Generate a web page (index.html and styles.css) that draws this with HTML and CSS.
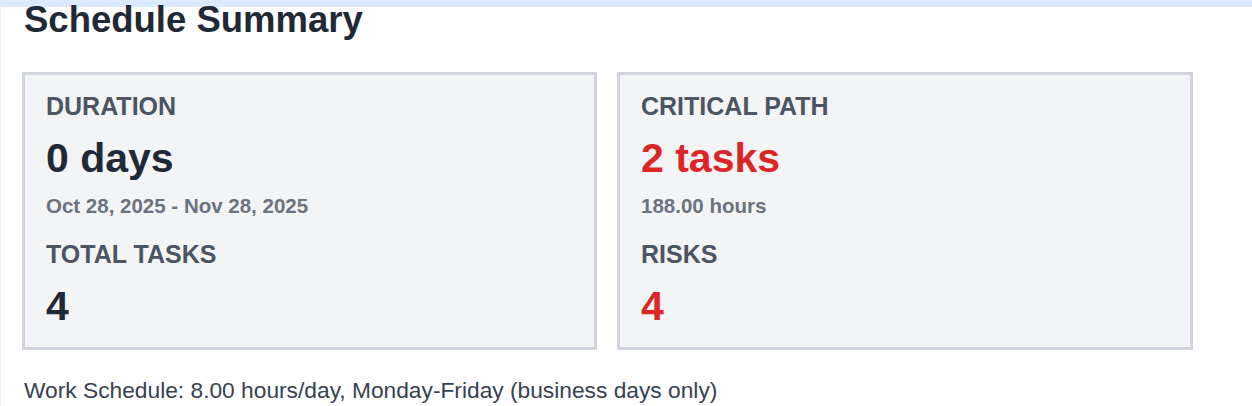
FILE: index.html
```html
<!DOCTYPE html>
<html lang="en">
<head>
<meta charset="utf-8">
<title>Schedule Summary</title>
<link rel="stylesheet" href="styles.css">
</head>
<body>
<div class="top-strip"></div>
<main class="page">
  <h2 class="title">Schedule Summary</h2>
  <div class="cards">
    <section class="card">
      <div class="label">DURATION</div>
      <div class="value">0 days</div>
      <div class="sub">Oct 28, 2025 - Nov 28, 2025</div>
      <div class="label label-second">TOTAL TASKS</div>
      <div class="value">4</div>
    </section>
    <section class="card">
      <div class="label">CRITICAL PATH</div>
      <div class="value value-red">2 tasks</div>
      <div class="sub">188.00 hours</div>
      <div class="label label-second">RISKS</div>
      <div class="value value-red">4</div>
    </section>
  </div>
  <p class="note">Work Schedule: 8.00 hours/day, Monday-Friday (business days only)</p>
</main>
</body>
</html>
```

FILE: styles.css
```css
html, body {
  margin: 0;
  padding: 0;
  background: #ffffff;
  font-family: "Liberation Sans", Arial, sans-serif;
}

.top-strip {
  height: 7px;
  background: #dbeafe;
}

.page {
  border-left: 1px solid #f3f4f6;
  padding: 0 0 0 21px;
  min-height: 399px;
  box-sizing: border-box;
}

.title {
  margin: 0 0 39px 2px;
  font-size: 36.5px;
  line-height: 26px;
  font-weight: 700;
  color: #1f2937;
}

.cards {
  display: grid;
  grid-template-columns: 575px 576px;
  column-gap: 20px;
}

.card {
  background: #f3f4f6;
  border: 3px solid #d1d5db;
  padding: 17px 21px;
}

.label {
  font-size: 25px;
  line-height: 28px;
  font-weight: 700;
  color: #4b5563;
  margin-bottom: 14px;
}

.label-second {
  margin-top: 22px;
}

.value {
  font-size: 41px;
  line-height: 48px;
  font-weight: 700;
  color: #1f2937;
}

.value-red {
  color: #dc2626;
}

.sub {
  margin-top: 12px;
  font-size: 20.5px;
  line-height: 24px;
  font-weight: 700;
  color: #6b7280;
}

.note {
  margin: 27px 0 0 2px;
  font-size: 22.75px;
  line-height: 26px;
  color: #374151;
}
```
